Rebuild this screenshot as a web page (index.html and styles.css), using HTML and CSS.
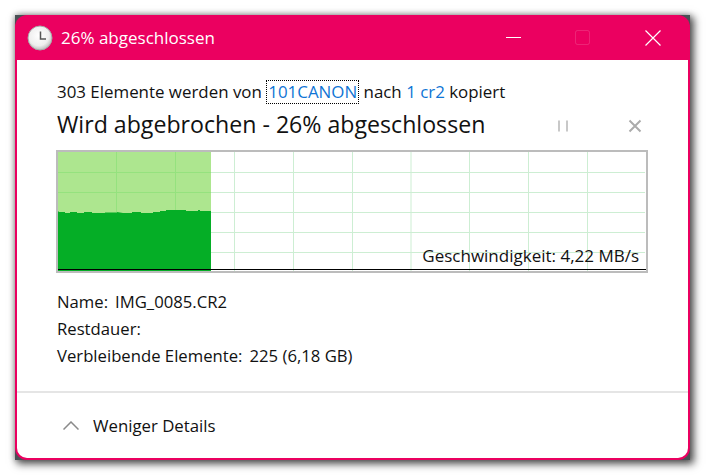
FILE: index.html
```html
<!DOCTYPE html>
<html lang="de">

<head>
    <meta charset="UTF-8" />
    <title>26% abgeschlossen</title>
    <link rel="stylesheet" href="styles.css">
</head>

<body>
    <div class="window">
        <div class="frame">
            <div class="title-bar">
                <svg class="clock" width="26" height="26" viewBox="0 0 26 26">
                    <defs>
                        <radialGradient id="clockFace" cx="45%" cy="40%" r="60%">
                            <stop offset="0" stop-color="#ffffff" />
                            <stop offset="0.7" stop-color="#eeeeee" />
                            <stop offset="1" stop-color="#bdbdbd" />
                        </radialGradient>
                    </defs>
                    <circle cx="13" cy="13" r="12" fill="url(#clockFace)" stroke="#a9a9a9" />
                    <path d="M13.5 6.5V14H19" fill="none" stroke="#555" stroke-width="1.5" />
                </svg>
                <span class="title-text">26% abgeschlossen</span>
                <div class="window-buttons">
                    <svg width="16" height="16" viewBox="0 0 16 16">
                        <path d="M1 7.500H16" stroke="#fff" stroke-width="1" />
                    </svg>
                    <svg width="16" height="16" viewBox="0 0 16 16">
                        <rect x="0.500" y="0.500" width="14" height="14" rx="2" fill="none" stroke="#fff" stroke-opacity="0.14" stroke-width="1" />
                    </svg>
                    <svg width="16" height="16" viewBox="0 0 16 16">
                        <path d="M0.500 0.500L15.500 15.500M15.500 0.500L0.500 15.500" stroke="#fff" stroke-width="1.200" />
                    </svg>
                </div>
            </div>

            <div class="content">
                <div class="main">
                    <div class="copy-line">
                        303 Elemente werden von <span class="link focused">101CANON</span> nach <span class="link">1 cr2</span> kopiert
                    </div>
                    <div class="heading-row">
                        <h1>Wird abgebrochen - 26% abgeschlossen</h1>
                        <svg class="pause" width="12" height="12" viewBox="0 0 12 12">
                            <path d="M2 0.500V11.500M10 0.500V11.500" stroke="#c8c8c8" stroke-width="2" />
                        </svg>
                        <svg class="cancel" width="14" height="14" viewBox="0 0 14 14">
                            <path d="M1.500 1.500L12.500 12.500M12.500 1.500L1.500 12.500" stroke="#ababab" stroke-width="2" />
                        </svg>
                    </div>

                    <div class="graph">
                        <svg width="592" height="123" viewBox="-1 -1 592 123">
                            <g stroke="#cdeed3" stroke-width="1">
                                <path d="M59.500 1V120M118.500 1V120M177.500 1V120M236.500 1V120M295.500 1V120M354 1V120M412.500 1V120M471.500 1V120M530.500 1V120" />
                                <path d="M1 21.500H588M1 41.500H588M1 61.500H588M1 81.500H588M1 101.500H588" />
                            </g>
                            <rect x="1" y="1" width="153" height="62" fill="#ade68f" />
                            <g stroke="#95e27e" stroke-width="1">
                                <path d="M59.500 1V61M118.500 1V61M1 21.500H154M1 41.500H154" />
                            </g>
                            <polygon fill="#05ae26" points="1,60 2,61 8,61 8,62 13,62 13,61 20,61 20,62 27,62 27,61 35,61 35,62 48,62 48,61.500 60,61.500 60,61 66,62 75,62 75,61 84,61 84,62 96,62 96,61 103,61 103,60 109,60 109,59 129,59 129,60 141,60 141,59 143,59 143,60 154,60 154,120 1,120" />
                            <path d="M1 118.500H589" stroke="#000" stroke-width="1" />
                            <rect x="0" y="0" width="590" height="121" fill="none" stroke="#bcbcbc" stroke-width="2" />
                        </svg>
                        <span class="speed">Geschwindigkeit: 4,22 MB/s</span>
                    </div>

                    <div class="details">
                        <div class="detail-row"><span>Name:</span> <span>IMG_0085.CR2</span></div>
                        <div class="detail-row"><span>Restdauer:</span></div>
                        <div class="detail-row"><span>Verbleibende Elemente:</span> <span>225 (6,18 GB)</span></div>
                    </div>
                </div>

                <div class="footer">
                    <svg width="16" height="9" viewBox="0 0 16 9">
                        <path d="M0.500 8.500L8 1L15.500 8.500" fill="none" stroke="#8a8a8a" stroke-width="1.500" />
                    </svg>
                    <span>Weniger Details</span>
                </div>
            </div>
        </div>
    </div>
</body>

</html>
```

FILE: styles.css
```css
* {
    box-sizing: border-box;
}

body {
    margin: 0;
    background: #fff;
    font-family: "Open Sans", "Noto Sans", sans-serif;
    font-size: 17px;
    color: #111;
}

.window {
    width: 675px;
    height: 445px;
    margin: 15px;
    background: #4a5055;
    box-shadow: 3px 3px 8px 1px rgba(0, 0, 0, 0.65), 0 0 6px rgba(0, 0, 0, 0.3);
}

.frame {
    height: 100%;
    display: flex;
    flex-direction: column;
    background: #eb0060;
    border-radius: 12px;
    padding: 0 2px 2px 2px;
}

.title-bar {
    height: 45px;
    flex: none;
    display: flex;
    align-items: center;
    color: #fff;
    font-size: 17px;
}

.clock {
    margin-left: 10px;
    margin-right: 8px;
}

.window-buttons {
    margin-left: auto;
    display: flex;
    gap: 54px;
    margin-right: 27px;
}

.content {
    flex: 1;
    display: flex;
    flex-direction: column;
    background: #fff;
    border-radius: 0 0 10px 10px;
}

.main {
    flex: 1;
    padding: 20px 40px 0 40px;
}

.copy-line {
    height: 24px;
    line-height: 24px;
    font-size: 16.900px;
    white-space: nowrap;
}

.link {
    color: #0f75d5;
}

.focused {
    display: inline-block;
    outline: 1px dotted #000;
    outline-offset: -1px;
    padding: 0 2px;
}

.heading-row {
    display: flex;
    align-items: center;
    height: 36px;
    margin-top: 2px;
}

h1 {
    margin: 0;
    font-size: 23.150px;
    font-weight: 400;
    white-space: nowrap;
}

.pause {
    margin-left: auto;
    margin-right: 59px;
    margin-top: 3px;
}

.cancel {
    margin-right: 6px;
    margin-top: 4px;
}

.graph {
    position: relative;
    width: 592px;
    height: 123px;
    margin: 8px 0 0 -1px;
}

.graph svg {
    display: block;
}

.speed {
    position: absolute;
    right: 9px;
    bottom: 6px;
}

.details {
    margin-top: 15px;
    font-size: 16.700px;
}

.detail-row {
    height: 27px;
    line-height: 27px;
    display: flex;
    gap: 7px;
}

.footer {
    height: 67px;
    flex: none;
    border-top: 2px solid #e5e5e5;
    display: flex;
    align-items: center;
    padding-left: 46px;
    gap: 14px;
    font-size: 16.800px;
}
```
